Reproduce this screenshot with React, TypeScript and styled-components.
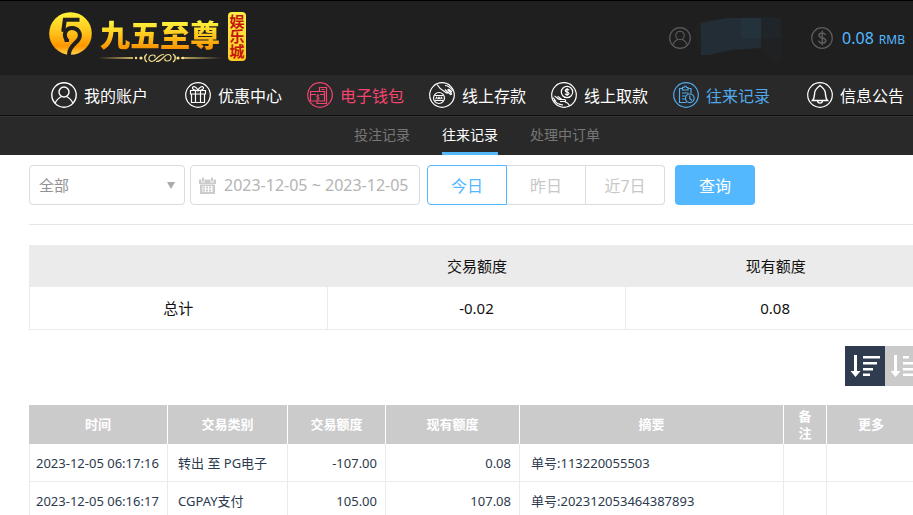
import React from "react";
import styled, { createGlobalStyle, css } from "styled-components";

const GlobalStyle = createGlobalStyle`
  *, *::before, *::after { box-sizing: border-box; }
  html { overflow: hidden; }
  body { margin: 0; background: #fff; }
  body, button, input, select {
    font-family: "Noto Sans", "Noto Sans CJK SC", sans-serif;
  }
`;

const BLUE = "#54b8ff";

const Page = styled.div`
  width: 100%;
  min-width: 954px;
`;

/* ---------- top bar ---------- */

const TopBar = styled.header`
  display: flex;
  justify-content: space-between;
  align-items: center;
  height: 75px;
  padding: 0 49px;
  border-top: 1px solid #000;
  background: #1f1f1f;
`;

const Logo = styled.a`
  display: flex;
  align-items: flex-start;
  gap: 6px;
  height: 52px;
  text-decoration: none;
`;

const LogoWords = styled.span`
  display: flex;
  flex-direction: column;
  align-items: center;
  padding-top: 5px;
`;

const LogoName = styled.span`
  font-size: 30px;
  line-height: 36px;
  font-weight: 900;
  color: transparent;
  background: linear-gradient(#fff23a 15%, #ffc21a 55%, #f78f00 90%);
  background-clip: text;
  -webkit-background-clip: text;
`;

const LogoBadge = styled.span`
  width: 18px;
  padding: 2px 1px;
  border-radius: 4px;
  background: linear-gradient(#fff04a, #ffc928);
  color: #c4160c;
  font-size: 15px;
  line-height: 15px;
  font-weight: 700;
  text-align: center;
  word-break: break-all;
`;

const Account = styled.div`
  display: flex;
  align-items: center;
`;

const Money = styled.span`
  display: flex;
  align-items: baseline;
  gap: 5px;
  margin-left: 9px;
  padding-top: 2px;
  color: ${BLUE};
  font-size: 16px;
  line-height: 22px;

  small { font-size: 12px; }
`;

/* ---------- navigation ---------- */

const Nav = styled.nav`
  display: flex;
  gap: 25px;
  height: 41px;
  padding-left: 51px;
  background: #292929;
  border-bottom: 1px solid #0c0c0c;
`;

const NavItem = styled.a<{ $tone?: string; $spaced?: "before" | "after" }>`
  display: flex;
  align-items: center;
  gap: 7px;
  color: ${(p) => p.$tone ?? "#fff"};
  font-size: 16px;
  line-height: 24px;
  white-space: nowrap;
  text-decoration: none;
  ${(p) => p.$spaced === "before" && css`margin-left: 12px;`}
  ${(p) => p.$spaced === "after" && css`margin-right: 12px;`}

  svg { flex: none; }
`;

const NavLabel = styled.span`
  padding-top: 2px;
`;

const SubNav = styled.nav`
  display: flex;
  justify-content: center;
  gap: 32px;
  height: 39px;
  background: #292929;
  border-top: 1px solid #343434;
`;

const SubItem = styled.a<{ $active?: boolean }>`
  border-bottom: 3px solid ${(p) => (p.$active ? BLUE : "transparent")};
  color: ${(p) => (p.$active ? "#fff" : "#777")};
  font-size: 14px;
  line-height: 36px;
  text-decoration: none;
`;

/* ---------- filters ---------- */

const Main = styled.main`
  padding: 10px 29px 0;
`;

const Filters = styled.form`
  display: flex;
  align-items: center;
  padding-bottom: 19px;
  border-bottom: 1px solid #e6e6e6;
`;

const Field = styled.label<{ $wide?: boolean }>`
  display: flex;
  align-items: center;
  width: ${(p) => (p.$wide ? "230px" : "156px")};
  height: 40px;
  padding: 0 8px;
  margin-right: ${(p) => (p.$wide ? "7px" : "5px")};
  border: 1px solid #dcdcdc;
  border-radius: 4px;
`;

const Select = styled.select`
  flex: 1;
  min-width: 0;
  height: 36px;
  padding: 0 0 0 1px;
  border: 0;
  appearance: none;
  background: transparent;
  color: #929292;
  font-size: 15px;
  outline: none;
`;

const DateInput = styled.input`
  flex: 1;
  min-width: 0;
  height: 36px;
  margin-left: 8px;
  padding: 0;
  border: 0;
  background: transparent;
  color: #b4b4b4;
  font-size: 16px;
  outline: none;
`;

const Ranges = styled.div`
  display: flex;
  margin-right: 10px;
`;

const RangeButton = styled.button<{ $active?: boolean }>`
  width: 79px;
  height: 40px;
  padding: 0;
  border: 1px solid #dcdcdc;
  border-left-width: 0;
  background: #fff;
  color: #c8c8c8;
  font-size: 16px;

  &:last-child { border-radius: 0 4px 4px 0; }

  ${(p) =>
    p.$active &&
    css`
      width: 80px;
      border: 1px solid ${BLUE};
      border-radius: 4px 0 0 4px;
      color: ${BLUE};
    `}
`;

const Submit = styled.button`
  width: 80px;
  height: 40px;
  padding: 0;
  border: 0;
  border-radius: 4px;
  background: ${BLUE};
  color: #fff;
  font-size: 16px;
`;

/* ---------- tables ---------- */

const Summary = styled.table`
  width: 100%;
  margin-top: 20px;
  table-layout: fixed;
  border-collapse: separate;
  border-spacing: 0;
  color: #111;
  font-size: 15px;
  line-height: 22px;
  text-align: center;

  th, td { padding: 0; font-weight: 400; }
  thead th { height: 42px; background: #ebebeb; }
  tbody th, tbody td {
    height: 43px;
    border: solid #ebebeb;
    border-width: 0 1px 1px 0;
  }
  tbody th { border-left-width: 1px; }
`;

const SortBar = styled.div`
  display: flex;
  justify-content: flex-end;
  margin: 16px 0 19px;
`;

const SortButton = styled.button<{ $active?: boolean }>`
  display: flex;
  width: 40px;
  height: 40px;
  padding: 0;
  border: 0;
  background: ${(p) => (p.$active ? "#2f3c50" : "#cacaca")};
`;

const Records = styled.table`
  width: 100%;
  table-layout: fixed;
  border-collapse: separate;
  border-spacing: 0;
  color: #2c3a4e;
  font-size: 13px;
  line-height: 17px;

  th {
    height: 39px;
    padding: 0;
    background: #cbcbcb;
    border-right: 1px solid #fff;
    color: #fff;
    font-weight: 700;
  }
  th:last-child { padding-right: 9px; }
  td {
    height: 38px;
    border: solid #ebebeb;
    border-width: 0 1px 1px 0;
    white-space: nowrap;
  }
  td:first-child { border-left-width: 1px; }
`;

const Col = styled.col<{ $w?: number }>`
  ${(p) => p.$w && css`width: ${p.$w}px;`}
`;

const HeadText = styled.span<{ $narrow?: boolean }>`
  display: block;
  ${(p) => p.$narrow && css`width: 14px; margin: 0 auto;`}
`;

const Cell = styled.td<{ $align?: "right" }>`
  padding: 1px 8px 0 10px;
  text-align: ${(p) => p.$align ?? "left"};
`;

const TimeCell = styled(Cell)`
  padding: 1px 0 0 6px;
`;

const NoteCell = styled(Cell)`
  padding-left: 11px;
`;

/* ---------- drawings ---------- */

const Emblem = () => (
  <svg width="43" height="43" viewBox="0 0 43 43" aria-hidden="true">
    <defs>
      <linearGradient id="gold" x1="0" y1="0" x2="0" y2="1">
        <stop offset="0" stopColor="#fff338" />
        <stop offset=".45" stopColor="#ffc51c" />
        <stop offset=".8" stopColor="#ff9500" />
        <stop offset="1" stopColor="#ffd54a" />
      </linearGradient>
    </defs>
    <circle cx="21.500" cy="21.500" r="21.300" fill="url(#gold)" />
    <g fill="none" stroke="#1f1f1f">
      <path d="M30.500 7.800H15.800L14.500 17.500" strokeWidth="4" />
      <path d="M12.500 18.300H16.500" strokeWidth="3" />
      <path d="M17.800 28C13.500 22.500 17 16 23 16C29.500 16 32.500 22 29.800 27C27.500 31.500 19.500 34.500 20 43" strokeWidth="4" />
      <path d="M15.500 28.500H20" strokeWidth="3" />
    </g>
  </svg>
);

const Flourish = () => (
  <svg width="124" height="10" viewBox="0 0 124 10" fill="none" stroke="#f0dc8c" aria-hidden="true">
    <path d="M0 5L35 4V6ZM124 5L83 4V6Z" fill="#c9b062" stroke="none" />
    <g fill="#ffe98c" stroke="none">
      <circle cx="38" cy="5" r="1.200" /><circle cx="43" cy="5" r="1.600" />
      <circle cx="80" cy="5" r="1.600" /><circle cx="85" cy="5" r="1.200" />
    </g>
    <path d="M49 1C46 3 46 7 49 9M75 1C78 3 78 7 75 9" strokeWidth="1.400" />
    <path d="M66 1.500C60 1 58 8.500 54 8.500C49.500 8.500 50 2 55 2C57 2 58 3.500 56.500 4.500M58 8.500C64 9 66 1.500 70 1.500C74.500 1.500 74 8 69 8C67 8 66 6.500 67.500 5.500" strokeWidth="1.200" />
  </svg>
);

const UserIcon = ({ size = 26, color = "currentColor" }: { size?: number; color?: string }) => (
  <svg width={size} height={size} viewBox="0 0 26 26" fill="none" stroke={color} strokeWidth="1.400" aria-hidden="true">
    <circle cx="13" cy="13" r="12.200" />
    <circle cx="13" cy="10" r="5" />
    <path d="M4 21.500C5.500 17.500 8 15.800 10.500 14.500M15.500 14.500C18 15.800 20.500 17.500 22 21.500" />
  </svg>
);

const DollarIcon = () => (
  <svg width="22" height="22" viewBox="0 0 22 22" fill="none" stroke="#5c5c5c" strokeWidth="1.200" aria-hidden="true">
    <circle cx="11" cy="11" r="10.300" />
    <path d="M14.500 8C14 6.500 12.700 6 11.200 6C9.500 6 8 6.800 8 8.400C8 12 14.800 9.800 14.800 13.600C14.800 15.300 13.200 16.200 11.300 16.200C9.500 16.200 8 15.400 7.600 13.700M11.300 3.800V18.200" strokeWidth="1.500" />
  </svg>
);

const RoundIcon = ({ children }: { children: React.ReactNode }) => (
  <svg width="26" height="26" viewBox="0 0 26 26" fill="none" stroke="currentColor" strokeWidth="1.200" aria-hidden="true">
    <circle cx="13" cy="13" r="12.300" />
    {children}
  </svg>
);

const GiftIcon = () => (
  <RoundIcon>
    <path d="M5.500 8.500H20.500V12H5.500ZM6.500 12V20.500H19.500V12M10.500 8.500V20.500M15.500 8.500V20.500M13 8.500C9 8.500 7 7 7.500 5.500C8.500 3.500 12 5 13 8.500C14 5 17.500 3.500 18.500 5.500C19 7 17 8.500 13 8.500" />
  </RoundIcon>
);

const WalletIcon = () => (
  <RoundIcon>
    <path d="M12.500 9V5.500H19.500V21.500H10V19.500M3.500 9.500H17.500V19H3.500ZM3.500 12.500H9M13 12.500H17.500M14.500 7.500H17.500" />
    <path d="M12.300 13.500C10.500 12.700 9.300 13.500 9.600 14.500C10 15.700 12.200 15 12.200 16.400C12.200 17.500 10.300 17.800 9.300 17M10.900 12V18.500" strokeWidth="1" />
  </RoundIcon>
);

const DepositIcon = () => (
  <RoundIcon>
    <circle cx="10" cy="16" r="5.500" />
    <path d="M6 13.500H14M6 18.500H14M6.800 17.200L7.600 14.800L8.400 17.200M9.200 17.200L10 14.800L10.800 17.200M11.600 17.200L12.400 14.800L13.200 17.200" strokeWidth="1" />
    <path d="M8 2.500C10 5.500 11 7 14 8.500L17.500 11C18.700 11.500 19 10.500 18.300 9.800L16 7.500M16 3.500C18 3.500 20 4 24 8.500M18.300 9.800L21.500 12.500C22.500 12.800 22.700 11.800 22 11L18.500 7.500M19.500 7L23 10" />
  </RoundIcon>
);

const WithdrawIcon = () => (
  <RoundIcon>
    <circle cx="16" cy="10" r="5.700" />
    <path d="M18 8.300C17.200 7 14.300 7.200 14.300 8.700C14.300 10.500 18 9.500 18 11.400C18 13 14.800 13.200 14.100 11.700M16.100 6V14" />
    <path d="M2 15.500L5 19.500M3.500 14C5.500 15 6.500 16.800 8.500 17.500L13.500 17.500C15 18 15 19.500 13.500 19.500H9M6.500 14.500C8.500 15 9.500 17 11 17.500M13.500 19.500C16 20.500 18 21.500 18.500 24M3 18C5 21.500 8 22.500 12 23" />
  </RoundIcon>
);

const RecordIcon = () => (
  <RoundIcon>
    <path d="M13.500 20.500H6.500V6.500H9.500M15 6.500H18V11.500M9.500 5.500H11C11 3.500 13.500 3.500 13.500 5.500H15V8H9.500ZM9 11H15.500M9 14H12.500M9 17H12" />
    <circle cx="16.800" cy="16.300" r="4.300" />
    <path d="M16.800 13.500V16.500L19 18.500" />
  </RoundIcon>
);

const BellIcon = () => (
  <RoundIcon>
    <path d="M5.500 18.500C7.500 16.500 7.300 14 7.700 10.500C8 7.500 10.500 5.500 13 3.500C15.500 5.500 18 7.500 18.300 10.500C18.700 14 18.500 16.500 20.500 18.500ZM10.500 18.500C10.700 22 15.300 22 15.500 18.500" strokeWidth="1.400" />
  </RoundIcon>
);

const Smudge = () => (
  <svg width="120" height="46" viewBox="0 0 120 46" aria-hidden="true">
    <path d="M2 14L10 5L75 0L90 3V46H82L68 34L10 40Z" fill="#202122" />
    <path d="M10 8L35 3H70V33L40 35L18 40H10Z" fill="#232d35" />
    <path d="M50 3H70V23H50Z" fill="#24323c" />
    <path d="M70 3H90V23H70Z" fill="#20252a" />
  </svg>
);

const CaretIcon = () => (
  <svg width="10" height="8" viewBox="0 0 10 8" aria-hidden="true">
    <path d="M1 1H9L5 8Z" fill="#aaa" />
  </svg>
);

const CalendarIcon = () => (
  <svg width="17" height="17" viewBox="0 0 17 17" aria-hidden="true">
    <path d="M0 2.500H2.500V5.500H5.500V2.500H11.500V5.500H14.500V2.500H17V7H0Z" fill="#ccc" />
    <path d="M3 0.500H5V4.500H3ZM12 0.500H14V4.500H12Z" fill="#ccc" />
    <path d="M1 7.500H16V17H1Z" fill="#ccc" />
    <path d="M3.500 9H13.500V15H3.500Z" fill="#fff" />
    <path d="M4 10.500H13M4 13.500H13" stroke="#ccc" strokeWidth="2" strokeDasharray="2 1" />
  </svg>
);

const SortIcon = ({ rising }: { rising?: boolean }) => (
  <svg width="40" height="40" viewBox="0 0 40 40" fill="#fff" aria-hidden="true">
    <path d="M9 9H12V25H15.500L10.500 31L5.500 25H9Z" />
    <path
      d={
        rising
          ? "M18 10H24V12.500H18ZM18 16H28V18.500H18ZM18 22H32V24.500H18ZM18 27.500H35V30H18Z"
          : "M18 10H35V12.500H18ZM18 16H32V18.500H18ZM18 22H28V24.500H18ZM18 27.500H25V30H18Z"
      }
    />
  </svg>
);

/* ---------- data ---------- */

type NavEntry = { label: string; Icon: React.ComponentType; tone?: string; spaced?: "before" | "after" };

const navEntries: NavEntry[] = [
  { label: "我的账户", Icon: UserIcon, spaced: "after" },
  { label: "优惠中心", Icon: GiftIcon },
  { label: "电子钱包", Icon: WalletIcon, tone: "#f2446f" },
  { label: "线上存款", Icon: DepositIcon },
  { label: "线上取款", Icon: WithdrawIcon },
  { label: "往来记录", Icon: RecordIcon, tone: "#4fa9ec" },
  { label: "信息公告", Icon: BellIcon, spaced: "before" },
];

const records = [
  { time: "2023-12-05 06:17:16", kind: "转出 至 PG电子", amount: "-107.00", balance: "0.08", note: "单号:113220055503" },
  { time: "2023-12-05 06:16:17", kind: "CGPAY支付", amount: "105.00", balance: "107.08", note: "单号:202312053464387893" },
];

const columns = [
  { label: "时间", width: 139 },
  { label: "交易类别", width: 120 },
  { label: "交易额度", width: 98 },
  { label: "现有额度", width: 134 },
  { label: "摘要", width: 264 },
  { label: "备注", width: 43 },
  { label: "更多" },
];

export default function App() {
  return (
    <Page>
      <GlobalStyle />
      <TopBar>
        <Logo href="#">
          <Emblem />
          <LogoWords>
            <LogoName>九五至尊</LogoName>
            <Flourish />
          </LogoWords>
          <LogoBadge>娱乐城</LogoBadge>
        </Logo>
        <Account>
          <UserIcon size={22} color="#5c5c5c" />
          <Smudge />
          <DollarIcon />
          <Money>
            0.08 <small>RMB</small>
          </Money>
        </Account>
      </TopBar>

      <Nav>
        {navEntries.map(({ label, Icon, tone, spaced }) => (
          <NavItem key={label} href="#" $tone={tone} $spaced={spaced}>
            <Icon />
            <NavLabel>{label}</NavLabel>
          </NavItem>
        ))}
      </Nav>
      <SubNav>
        <SubItem href="#">投注记录</SubItem>
        <SubItem href="#" $active>往来记录</SubItem>
        <SubItem href="#">处理中订单</SubItem>
      </SubNav>

      <Main>
        <Filters onSubmit={(e) => e.preventDefault()}>
          <Field>
            <Select aria-label="交易类别">
              <option>全部</option>
            </Select>
            <CaretIcon />
          </Field>
          <Field $wide>
            <CalendarIcon />
            <DateInput aria-label="时间" defaultValue="2023-12-05 ~ 2023-12-05" />
          </Field>
          <Ranges>
            <RangeButton type="button" $active>今日</RangeButton>
            <RangeButton type="button">昨日</RangeButton>
            <RangeButton type="button">近7日</RangeButton>
          </Ranges>
          <Submit type="submit">查询</Submit>
        </Filters>

        <Summary>
          <thead>
            <tr>
              <th />
              <th scope="col">交易额度</th>
              <th scope="col">现有额度</th>
            </tr>
          </thead>
          <tbody>
            <tr>
              <th scope="row">总计</th>
              <td>-0.02</td>
              <td>0.08</td>
            </tr>
          </tbody>
        </Summary>

        <SortBar>
          <SortButton type="button" aria-label="降序" $active>
            <SortIcon />
          </SortButton>
          <SortButton type="button" aria-label="升序">
            <SortIcon rising />
          </SortButton>
        </SortBar>

        <Records>
          <colgroup>
            {columns.map((c) => (
              <Col key={c.label} $w={c.width} />
            ))}
          </colgroup>
          <thead>
            <tr>
              {columns.map((c) => (
                <th key={c.label} scope="col">
                  <HeadText $narrow={c.width === 43}>{c.label}</HeadText>
                </th>
              ))}
            </tr>
          </thead>
          <tbody>
            {records.map((r) => (
              <tr key={r.time}>
                <TimeCell>{r.time}</TimeCell>
                <Cell>{r.kind}</Cell>
                <Cell $align="right">{r.amount}</Cell>
                <Cell $align="right">{r.balance}</Cell>
                <NoteCell>{r.note}</NoteCell>
                <Cell />
                <Cell />
              </tr>
            ))}
          </tbody>
        </Records>
      </Main>
    </Page>
  );
}
